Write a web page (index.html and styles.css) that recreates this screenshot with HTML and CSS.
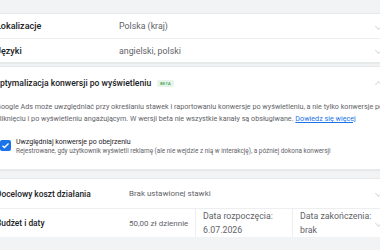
FILE: index.html
```html
<!DOCTYPE html>
<html lang="pl">
<head>
  <meta charset="UTF-8" />
  <title>Ustawienia kampanii</title>
  <link rel="stylesheet" href="styles.css">
</head>
<body>
  <main class="page">
    <section class="card">
      <div class="row">
        <div class="label">Lokalizacje</div>
        <div class="value">Polska (kraj)</div>
        <span class="chev"></span>
      </div>
      <div class="row">
        <div class="label">Języki</div>
        <div class="value">angielski, polski</div>
        <span class="chev"></span>
      </div>
    </section>

    <section class="card">
      <div class="row head">
        <div class="title">Optymalizacja konwersji po wyświetleniu <span class="beta">BETA</span></div>
        <span class="chev up"></span>
      </div>
      <div class="body">
        <p>Google Ads może uwzględniać przy określaniu stawek i raportowaniu konwersje po wyświetleniu, a nie tylko konwersje po kliknięciu i po wyświetleniu angażującym. W wersji beta nie wszystkie kanały są obsługiwane. <a href="#">Dowiedz się więcej</a></p>
        <label class="check">
          <span class="box">
            <svg viewBox="0 0 12 12" width="9" height="9"><path d="M2 6.2l2.6 2.6L10 3.4" fill="none" stroke="#fff" stroke-width="1.8"/></svg>
          </span>
          <span>
            <span class="check-title">Uwzględniaj konwersje po obejrzeniu</span>
            <span class="check-sub">Rejestrowane, gdy użytkownik wyświetli reklamę (ale nie wejdzie z nią w interakcję), a później dokona konwersji</span>
          </span>
        </label>
      </div>
    </section>

    <section class="card cost">
      <div class="row tall">
        <div class="label">Docelowy koszt działania</div>
        <div class="value">Brak ustawionej stawki</div>
        <span class="chev"></span>
      </div>
      <div class="row budget">
        <div class="label">Budżet i daty</div>
        <div class="value short">50,00 zł dziennie</div>
        <div class="date">Data rozpoczęcia:<br>6.07.2026</div>
        <div class="date last">Data zakończenia:<br>brak</div>
        <span class="chev"></span>
      </div>
    </section>
  </main>
</body>
</html>
```

FILE: styles.css
```css
* { margin: 0; padding: 0; box-sizing: border-box; }

body {
  background: #f1f3f4;
  font-family: Roboto, "Noto Sans", sans-serif;
  color: #3c4043;
  overflow: hidden;
}

.page {
  width: 430px;
  margin-left: -28px;
  padding-top: 14px;
  display: flex;
  flex-direction: column;
  gap: 5px;
}

.card {
  background: #fff;
  box-shadow: 0 0 0 1px #e6e8ea, 0 1px 2px rgba(60,64,67,0.15);
}
.card.cost { margin-top: 5px; }

.row {
  display: flex;
  align-items: center;
  min-height: 24px;
  padding: 0 21px 0 24px;
  border-top: 1px solid #eceef0;
  font-size: 8.8px;
}
.row:first-child { border-top: none; }
.row.tall { min-height: 29px; }

.label {
  flex: 0 0 123px;
  font-size: 9px;
  font-weight: 500;
  color: #202124;
}
.value { flex: 1; color: #5f6368; }

.cost .label { flex-basis: 133px; font-size: 8.4px; }
.cost .value { font-size: 8px; }
.value.short { flex: 0 0 66px; }

.chev {
  flex: 0 0 5px;
  width: 5px; height: 5px;
  border-right: 1.2px solid #dadce0;
  border-bottom: 1.2px solid #dadce0;
  transform: rotate(45deg);
}
.chev.up { transform: rotate(-135deg); margin-top: 3px; }

.head { min-height: 32px; padding-left: 22px; }
.title { flex: 1; font-size: 8.6px; font-weight: 500; color: #202124; }
.beta {
  display: inline-block;
  margin-left: 4px;
  padding: 1px 3px;
  font-size: 3.8px;
  letter-spacing: 0.3px;
  color: #1e8e3e;
  background: #e6f4ea;
  border-radius: 2px;
  vertical-align: middle;
}

.body {
  padding: 2px 6px 14px 24px;
}
.body p {
  font-size: 7.2px;
  line-height: 12px;
  color: #5f6368;
}
.body a { color: #1a73e8; }

.check {
  display: flex;
  align-items: flex-start;
  gap: 5px;
  margin-top: 13px;
  padding-left: 4px;
}
.box {
  width: 11px; height: 11px;
  margin-top: 2px;
  background: #1a73e8;
  border-radius: 2px;
  display: flex; align-items: center; justify-content: center;
}
.check-title { display: block; font-size: 7px; line-height: 9px; color: #202124; }
.check-sub { display: block; font-size: 6.4px; line-height: 8px; color: #5f6368; }

.budget { min-height: 26px; align-items: stretch; }
.budget .label, .budget .value { align-self: center; }
.date {
  flex: 0 0 97px;
  padding: 0 0 0 7px;
  border-left: 1px solid #eceef0;
  color: #5f6368;
  font-size: 8.8px;
  line-height: 14px;
  display: flex; flex-direction: column; justify-content: center;
}
.date.last { flex: 1; }
.budget .chev { align-self: center; }
```
